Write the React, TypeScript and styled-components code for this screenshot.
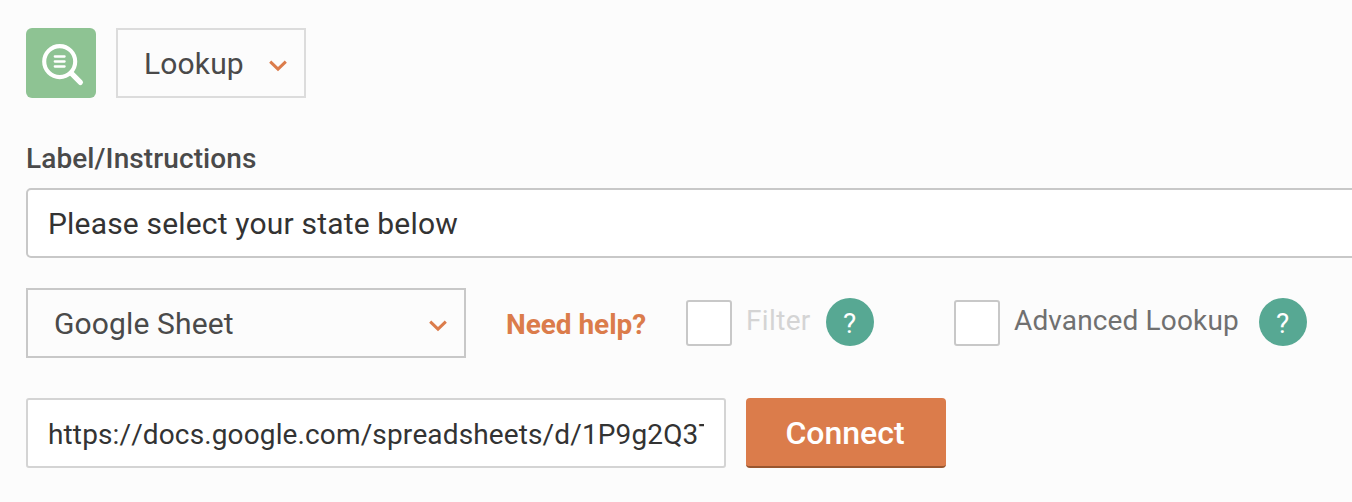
import React from "react";
import styled, { createGlobalStyle } from "styled-components";

const Global = createGlobalStyle`
  *, *::before, *::after { box-sizing: border-box; }
  body {
    margin: 0;
    background: #fcfcfc;
    font-family: Roboto, "Liberation Sans", sans-serif;
    overflow: hidden;
  }
`;

const Panel = styled.main`
  display: flex;
  flex-direction: column;
  height: 502px;
  padding: 28px 0 0 26px;
  overflow: hidden;
`;

const Row = styled.div<{ $top?: number }>`
  display: flex;
  align-items: flex-start;
  height: 70px;
  margin-top: ${(p) => p.$top ?? 0}px;
`;

const TypeBadge = styled.div`
  width: 70px;
  height: 70px;
  margin-right: 20px;
  border-radius: 6px;
  background: #8ec393;
  svg { display: block; }
`;

const Select = styled.div<{ $width: number; $border: string }>`
  display: flex;
  align-items: flex-start;
  justify-content: space-between;
  flex: none;
  width: ${(p) => p.$width}px;
  height: 70px;
  padding: 0 17px 0 26px;
  border: 2px solid ${(p) => p.$border};
  color: #4a4a4a;
  font-size: 30px;
  line-height: 68px;
  letter-spacing: 0.14px;
`;

const Arrow = styled.svg`
  display: block;
  width: 18px;
  height: 12px;
  margin-top: 30px;
`;

const FieldLabel = styled.label`
  display: block;
  margin-top: 42px;
  height: 48px;
  color: #4a4a4a;
  font-size: 28px;
  font-weight: 500;
  line-height: 38px;
  letter-spacing: 0.1px;
`;

const LabelInput = styled.input`
  display: block;
  flex: none;
  width: 1340px;
  height: 70px;
  padding: 0 20px;
  border: 2px solid #c8c8c8;
  border-radius: 5px;
  background: #fff;
  color: #333;
  font: 400 30px Roboto, sans-serif;
  letter-spacing: 0.18px;
  outline: none;
`;

const UrlInput = styled(LabelInput)`
  width: 700px;
  margin-right: 20px;
  padding-top: 2px;
  border-color: #d4d4d4;
  border-radius: 3px;
  font-size: 28px;
  font-kerning: none;
  letter-spacing: 0.13px;
`;

const HelpLink = styled.a`
  flex: none;
  width: 220px;
  padding-left: 40px;
  color: #db7c4b;
  font-size: 28px;
  font-weight: 700;
  line-height: 74px;
  letter-spacing: -0.05px;
  white-space: nowrap;
`;

const CheckOption = styled.label<{ $width: number; $color: string }>`
  display: flex;
  align-items: flex-start;
  flex: none;
  width: ${(p) => p.$width}px;
  padding-top: 10px;
  color: ${(p) => p.$color};
  font-size: 28px;
  line-height: 46px;
`;

const CheckBox = styled.span`
  flex: none;
  width: 46px;
  height: 46px;
  margin: 2px 14px 0 0;
  border: 2px solid #c8c8c8;
  border-radius: 3px;
  background: #fff;
`;

const OptionText = styled.span<{ $width: number; $spacing: number }>`
  flex: none;
  width: ${(p) => p.$width}px;
  letter-spacing: ${(p) => p.$spacing}px;
  white-space: nowrap;
`;

const HelpDot = styled.span`
  flex: none;
  width: 48px;
  height: 48px;
  padding-right: 1px;
  border-radius: 50%;
  background: #57a893;
  color: #fff;
  font-size: 28px;
  font-weight: 400;
  line-height: 52px;
  text-align: center;
`;

const ConnectButton = styled.button`
  width: 200px;
  height: 70px;
  padding: 2px 2px 0 0;
  border: 0;
  border-bottom: 2px solid #99562f;
  border-radius: 4px;
  background: #db7c4b;
  color: #fff;
  font: 500 32px/66px Roboto, sans-serif;
`;

const Chevron = () => (
  <Arrow viewBox="0 0 18 12" fill="none" stroke="#db7c4b" strokeWidth="3">
    <path d="M1.2 1.7 9 9.2 16.8 1.7" />
  </Arrow>
);

const LookupIcon = () => (
  <svg width="70" height="70" viewBox="0 0 70 70" fill="none" stroke="#fff" strokeLinecap="round">
    <circle cx="33.7" cy="33.6" r="15.5" strokeWidth="4.1" />
    <path d="M45.2 45.2 54.4 54.4" strokeWidth="5.2" />
    <path d="M28.8 28.5h9.8M28.8 33.5h9.8M28.8 38.5h9.8" strokeWidth="2.3" />
  </svg>
);

export default function App() {
  return (
    <>
      <Global />
      <Panel>
        <Row>
          <TypeBadge><LookupIcon /></TypeBadge>
          <Select $width={190} $border="#dcdcdc">
            Lookup
            <Chevron />
          </Select>
        </Row>
        <FieldLabel htmlFor="label">Label/Instructions</FieldLabel>
        <LabelInput id="label" defaultValue="Please select your state below" />
        <Row $top={30}>
          <Select $width={440} $border="#c8c8c8">
            Google Sheet
            <Chevron />
          </Select>
          <HelpLink>Need help?</HelpLink>
          <CheckOption $width={268} $color="#d4d4d4">
            <CheckBox />
            <OptionText $width={80} $spacing={0.35}>Filter</OptionText>
            <HelpDot>?</HelpDot>
          </CheckOption>
          <CheckOption $width={360} $color="#707070">
            <CheckBox />
            <OptionText $width={245} $spacing={0.14}>Advanced Lookup</OptionText>
            <HelpDot>?</HelpDot>
          </CheckOption>
        </Row>
        <Row $top={40}>
          <UrlInput
            aria-label="Sheet URL"
            defaultValue="https://docs.google.com/spreadsheets/d/1P9g2Q3T"
          />
          <ConnectButton>Connect</ConnectButton>
        </Row>
      </Panel>
    </>
  );
}
